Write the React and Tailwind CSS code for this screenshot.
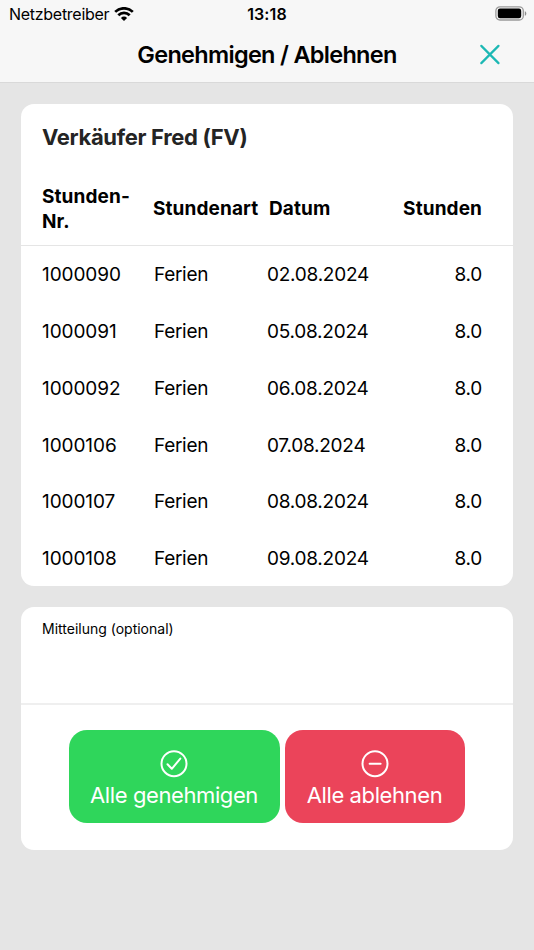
import { useState } from 'react';

const entries = [
  { id: '1000090', type: 'Ferien', date: '02.08.2024', hours: '8.0' },
  { id: '1000091', type: 'Ferien', date: '05.08.2024', hours: '8.0' },
  { id: '1000092', type: 'Ferien', date: '06.08.2024', hours: '8.0' },
  { id: '1000106', type: 'Ferien', date: '07.08.2024', hours: '8.0' },
  { id: '1000107', type: 'Ferien', date: '08.08.2024', hours: '8.0' },
  { id: '1000108', type: 'Ferien', date: '09.08.2024', hours: '8.0' },
];

function WifiIcon() {
  return (
    <svg width="20" height="15" viewBox="0 0 20 15" fill="none" stroke="black" strokeWidth="2.7">
      <path d="M1.2 4.9a12.5 12.5 0 0 1 17.6 0" />
      <path d="M4.3 8.3a8.1 8.1 0 0 1 11.4 0" />
      <path d="M10 14 6.9 10.9a4.4 4.4 0 0 1 6.2 0Z" fill="black" stroke="none" />
    </svg>
  );
}

function BatteryIcon() {
  return (
    <svg width="32" height="15" viewBox="0 0 32 15" fill="none">
      <rect x="0.9" y="0.8" width="27.4" height="13.2" rx="4" stroke="#9b9b9b" strokeWidth="1.3" />
      <rect x="2.8" y="2.6" width="23.4" height="9.6" rx="2.2" fill="black" />
      <path d="M29.8 5.2c2 .7 2 3.9 0 4.6Z" fill="#8f8f8f" />
    </svg>
  );
}

function StatusBar() {
  return (
    <div className="grid h-7 grid-cols-3 items-center px-[9px]">
      <div className="flex items-center gap-[5px]">
        <span className="text-[16px] tracking-[-0.28px]">Netzbetreiber</span>
        <WifiIcon />
      </div>
      <span className="text-center text-[16px] font-semibold tracking-[0.1px]">13:18</span>
      <div className="-mr-[2px] flex -translate-y-px justify-end">
        <BatteryIcon />
      </div>
    </div>
  );
}

function ActionButton({ label, className, children }) {
  return (
    <button className={`flex h-[93px] flex-col items-center rounded-[18px] pt-5 text-white ${className}`}>
      <svg width="28" height="28" viewBox="0 0 28 28" fill="none" stroke="white" strokeWidth="2" strokeLinecap="round" strokeLinejoin="round">
        <circle cx="14" cy="13.7" r="12.5" />
        {children}
      </svg>
      <span className="mt-[1px] whitespace-nowrap text-[22px] leading-[32px] tracking-[-0.4px]">{label}</span>
    </button>
  );
}

export default function App() {
  const [message, setMessage] = useState('');

  return (
    <div className="flex h-[950px] w-[534px] flex-col bg-[#e5e5e5] font-['Inter',sans-serif] text-black">
      {/* Header */}
      <header className="h-[83px] border-b border-[#d9d9d9] bg-[#f7f7f7]">
        <StatusBar />
        <div className="grid h-[54px] grid-cols-[60px_1fr_60px] items-center">
          <h1 className="col-start-2 text-center text-[23.5px] font-semibold tracking-[-0.7px]">Genehmigen / Ablehnen</h1>
          <button aria-label="Schliessen" className="ml-[5px]">
            <svg width="22" height="22" viewBox="0 0 22 22" fill="none" stroke="#1cb8b4" strokeWidth="2.2" strokeLinecap="round">
              <path d="M2.3 1.9 19.5 19.1M19.5 1.9 2.3 19.1" />
            </svg>
          </button>
        </div>
      </header>

      <main className="flex flex-col gap-[21px] px-[21px] pt-[21px]">
        {/* Hours */}
        <section className="h-[482px] overflow-hidden rounded-[13px] bg-white">
          <h2 className="h-[67px] pl-[21px] pt-[17px] text-[22px] font-bold leading-[33px] tracking-[-0.33px] text-[#242424]">Verkäufer Fred (FV)</h2>
          <div className="grid h-[75px] grid-cols-[111px_116px_1fr_100px] items-center border-b border-[#e5e5e5] pl-[21px] pr-[31px] pt-px text-[19px] font-bold leading-[25px] tracking-[0.1px]">
            <span>Stunden-<br />Nr.</span>
            <span>Stundenart</span>
            <span>Datum</span>
            <span className="text-right">Stunden</span>
          </div>
          {entries.map((entry) => (
            <div key={entry.id} className="grid h-[56.8px] grid-cols-[112px_113px_1fr_80px] items-center pl-[21px] pr-[31px] pt-[2px] text-[19px]">
              <span className="tracking-[-0.08px]">{entry.id}</span>
              <span className="tracking-[-0.3px]">{entry.type}</span>
              <span className="tracking-[-0.25px]">{entry.date}</span>
              <span className="text-right tracking-[-0.25px]">{entry.hours}</span>
            </div>
          ))}
        </section>

        {/* Message and actions */}
        <section className="h-[243px] overflow-hidden rounded-[13px] bg-white">
          <div className="h-[98px] border-b-2 border-[#efefef]">
            <textarea
              value={message}
              onChange={(e) => setMessage(e.target.value)}
              placeholder="Mitteilung (optional)"
              className="block h-24 w-full resize-none px-[21px] pt-3 text-[14px] leading-5 outline-none placeholder:text-black"
            />
          </div>
          <div className="flex justify-center gap-[5px] pr-px pt-[25px]">
            <ActionButton label="Alle genehmigen" className="w-[211px] bg-[#2fd65b]">
              <path d="M7.5 14.3 11.8 18.8 20.3 8.6" />
            </ActionButton>
            <ActionButton label="Alle ablehnen" className="w-[180px] bg-[#eb445a]">
              <path d="M8.6 13.7h11" />
            </ActionButton>
          </div>
        </section>
      </main>
    </div>
  );
}
